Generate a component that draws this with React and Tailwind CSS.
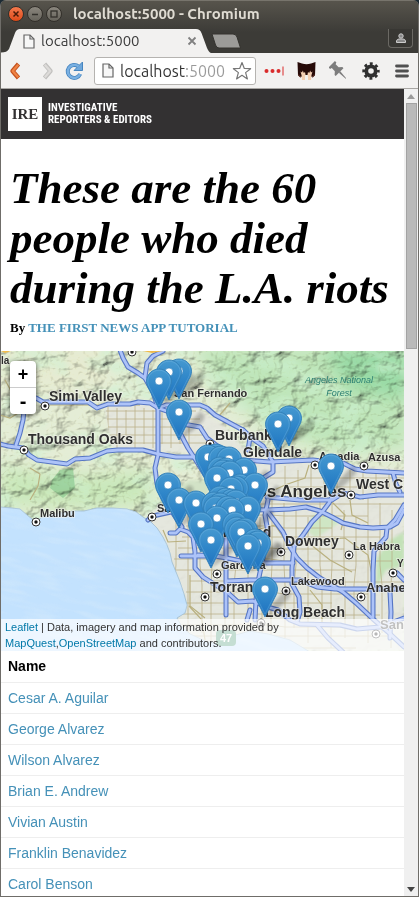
import React from "react";

const people = [
  "Cesar A. Aguilar",
  "George Alvarez",
  "Wilson Alvarez",
  "Brian E. Andrew",
  "Vivian Austin",
  "Franklin Benavidez",
  "Carol Benson",
];

const COAST =
  "M0 507L12 508L20 509L27 515L32 519L37 521L42 517L55 514L73 511L84 511L97 508L112 508L127 509L136 512L143 517L151 522L157 528L163 537L167 545L170 553L172 562L176 572L180 582L184 594L187 605L185 613L177 618L182 627L190 634L205 641L222 645L232 636L250 631L268 634L290 640L310 652L0 652Z";

const CITY =
  "M104 403L160 400L198 408L222 424L242 446L270 458L320 462L404 470L404 651L180 651L170 560L145 516L160 506L182 494L220 484L232 466L205 454L158 452L112 449Z";

const highways = [
  "M120 350L123 358L128 367L138 373L145 378L153 392L158 408L158 455L155 468L157 484L163 498L182 527",
  "M163 351L153 356L147 363L145 377",
  "M36 398L43 402L88 402L97 408L108 404L130 404L138 402L150 403L158 408L166 405L200 405L207 408L215 415L228 422L243 430L253 439L263 446L273 462",
  "M0 444L8 446L23 448L29 455L37 460L52 462L67 464L75 459L90 458L107 451L118 450L143 450L158 454L176 457L197 457L225 462L243 460L270 462L313 460L330 462L343 463L355 469L367 471L404 473",
  "M24 411L23 420L20 433L16 445",
  "M158 408L172 413L180 433L188 448L197 462L207 478L216 492",
  "M183 424L200 427L207 438L220 448L230 457",
  "M148 520L153 516L162 514L180 510L212 508L240 509L267 510L290 509L306 507L320 511L332 517L343 523L360 527L373 528L390 527L397 523L404 510",
  "M267 497L300 500L332 500L343 493L360 497L378 495L404 495",
  "M333 495L329 503L323 511L312 522L303 535L294 546L292 568L292 584L299 597L300 612L297 622",
  "M268 512L283 532L290 547L297 558L307 568L320 578L343 592L356 603L373 619L388 632L404 647",
  "M404 505L395 520L387 528L386 537L374 551L373 570L373 617",
  "M198 555L215 556L227 558L246 562L267 563L293 563",
  "M227 581L250 580L283 580L300 580L317 587L335 589L367 589L404 589",
  "M170 533L176 533L180 529L188 532L193 537L195 552L195 568L203 577L214 584L227 592L238 602L253 601L264 606L278 610L290 620L300 624L340 625L357 629L380 627L404 618",
  "M226 530L226 615",
  "M268 500L265 515L268 532L265 548L258 582L256 600L255 620",
  "M317 625L328 638L343 652",
  "M390 592L391 612L390 638",
  "M181 556L208 556",
  "M393 473L396 484L400 492",
  "M250 610L247 620",
  "M273 462L273 472L260 480L254 500",
  "M243 430L250 438L248 450",
  "M397 573L404 580",
];

const minorRoads = [
  "M30 468L40 474L38 486L30 500",
  "M0 415L10 418L20 412",
  "M43 405L140 405",
  "M5 380L15 398L30 402",
  "M270 492L285 485L305 478L309 465",
  "M256 530L275 525L285 540",
  "M320 540L345 538L368 555L372 575",
  "M330 500L345 515L341 530",
  "M350 500L352 515L368 523",
  "M305 540L330 560L352 572",
  "M205 640L202 620L189 606",
  "M163 530L168 542L186 541",
  "M230 403L219 416",
  "M256 473L245 462",
  "M310 590L322 605L322 625",
  "M190 575L190 606L205 618",
];

const towns = [
  [45, 406], [24, 450], [132, 352], [36, 522], [152, 517], [210, 444], [315, 465],
  [364, 466], [351, 495], [281, 552], [349, 555], [217, 574], [205, 597],
  [286, 591], [393, 573], [361, 597], [376, 634], [261, 623],
];

const labels = [
  ["Simi Valley", 49, 401, 14],
  ["Thousand Oaks", 28, 444, 14],
  ["la", 1, 364, 10],
  ["San Fernando", 174, 397, 11],
  ["Burbank", 215, 440, 14],
  ["Glendale", 243, 457, 14],
  ["Arcadia", 319, 460, 11],
  ["Azusa", 368, 461, 11],
  ["Los Angeles", 246, 497, 17],
  ["West C", 356, 489, 14],
  ["Malibu", 40, 517, 11],
  ["Santa", 157, 512, 11],
  ["Inglewood", 202, 537, 14],
  ["Downey", 285, 546, 14],
  ["La Habra", 353, 550, 11],
  ["Gardena", 221, 569, 11],
  ["Y", 397, 567, 10],
  ["Torrance", 210, 592, 14],
  ["Lakewood", 291, 585, 11],
  ["Anahe", 366, 592, 13],
  ["Long Beach", 265, 617, 14],
  ["San", 380, 629, 13],
];

const pins = [
  [179, 371], [169, 372], [159, 381], [179, 412], [289, 418], [278, 424],
  [216, 456], [208, 457], [221, 458], [229, 459], [331, 466], [220, 469],
  [244, 470], [226, 470], [223, 472], [230, 473], [217, 478], [168, 485],
  [240, 486], [255, 485], [236, 488], [231, 489], [220, 498], [179, 500],
  [226, 500], [232, 501], [236, 502], [196, 503], [214, 504], [220, 505],
  [248, 508], [216, 508], [228, 508], [232, 510], [217, 518], [235, 524],
  [201, 524], [237, 529], [245, 530], [241, 532], [211, 540], [255, 541],
  [258, 543], [248, 546], [265, 589],
];

const PIN =
  "M12.5 .5C5.8 .5 0 5.9 0 12.7C0 15.7 1.2 18.4 2.8 21.2L12.5 40.5L22.2 21.2C23.8 18.4 25 15.7 25 12.7C25 5.9 19.2 .5 12.5 .5Z";

function streetGrid() {
  const lines = [];
  for (let i = 0; i < 10; i++) {
    const x = 108 + i * 9;
    lines.push(`M${x} ${406 + (i % 3) * 2}V${444 + (i % 2) * 4}`);
  }
  for (let i = 0; i < 5; i++) {
    const y = 411 + i * 8;
    lines.push(`M${106 - (i % 2) * 10} ${y}H${196 + i * 4}`);
  }
  for (let i = 0; i < 19; i++) {
    const x = 176 + i * 12;
    const bend = ((i * 7) % 5) - 2;
    lines.push(`M${x} ${496 + ((i * 5) % 4) * 7}V565L${x + bend} 585V${628 + ((i * 3) % 5) * 5}`);
  }
  for (let i = 0; i < 14; i++) {
    const y = 504 + i * 11;
    const start = 170 + ((i * 11) % 6) * 4;
    const end = 404 - ((i * 17) % 7) * 12;
    lines.push(`M${start} ${y}H270L285 ${y + (i % 3)}H${end}`);
  }
  for (let i = 0; i < 9; i++) {
    lines.push(`M${285 + i * 13} ${466 + (i % 2) * 4}V${500 - (i % 3) * 5}`);
  }
  lines.push("M270 478H404", "M285 487H390");
  return lines.join("");
}

function Pin({ x, y }) {
  return (
    <g transform={`translate(${x - 12.5} ${y - 12.5})`}>
      <path d={PIN} fill="url(#pinFill)" stroke="#3380b8" strokeWidth=".9" />
      <path
        d="M12.5 1.7C6.5 1.7 1.3 6.6 1.3 12.7C1.3 15.4 2.4 18 3.9 20.6L12.5 37.6L21.1 20.6C22.6 18 23.7 15.4 23.7 12.7C23.7 6.6 18.5 1.7 12.5 1.7Z"
        fill="none"
        stroke="#8cc6ee"
        strokeOpacity=".28"
      />
      <circle cx="12.5" cy="12.5" r="4" fill="#fff" stroke="#2f7fbc" strokeWidth=".6" />
    </g>
  );
}

function MapArt() {
  return (
    <svg
      className="block h-[300px] w-full"
      viewBox="1 351 403 300"
      preserveAspectRatio="xMidYMid slice"
      role="img"
      aria-label="Map of Los Angeles"
    >
      <defs>
        <linearGradient id="pinFill" x1="0" y1="0" x2="0" y2="1">
          <stop offset="0" stopColor="#4699d0" />
          <stop offset=".5" stopColor="#2f86c9" />
          <stop offset="1" stopColor="#1d71bf" />
        </linearGradient>
        <filter id="soft" x="-30%" y="-30%" width="160%" height="160%">
          <feGaussianBlur stdDeviation="1.8" />
        </filter>
        <filter id="wash" x="-30%" y="-30%" width="160%" height="160%">
          <feGaussianBlur stdDeviation="9" />
        </filter>
        <filter id="relief" x="0" y="0" width="100%" height="100%">
          <feTurbulence type="fractalNoise" baseFrequency="0.05 0.065" numOctaves="4" seed="8" />
          <feColorMatrix values="0 0 0 0 0  0 0 0 0 0  0 0 0 0 0  1 0 0 0 0" />
          <feDiffuseLighting surfaceScale="10" diffuseConstant="1.25" lightingColor="#fffdf4">
            <feDistantLight azimuth="225" elevation="60" />
          </feDiffuseLighting>
        </filter>
        <filter id="patches" x="0" y="0" width="100%" height="100%">
          <feTurbulence type="fractalNoise" baseFrequency="0.022 0.035" numOctaves="3" seed="21" />
          <feColorMatrix values="0 0 0 0 .62  0 0 0 0 .88  0 0 0 0 .65  5 0 0 0 -2.35" />
        </filter>
        <filter id="waves" x="0" y="0" width="100%" height="100%">
          <feTurbulence type="fractalNoise" baseFrequency="0.03 0.16" numOctaves="2" seed="4" />
          <feColorMatrix values="0 0 0 0 .69  0 0 0 0 .84  0 0 0 0 .97  3 0 0 0 -1.3" />
        </filter>
        <clipPath id="sea"><path d={COAST} /></clipPath>
        <clipPath id="town"><path d={CITY} /></clipPath>
      </defs>

      <rect x="1" y="351" width="403" height="300" fill="#e4edd6" />
      <g filter="url(#wash)">
        <path d="M190 345H410V450L330 452L270 430L215 385Z" fill="#bfe6bb" />
        <path d="M0 465L60 475L150 470V505L90 510L0 505Z" fill="#c9e8bb" />
        <path d="M320 345H410V400L350 390Z" fill="#98daa6" />
        <path d="M0 345H120L100 385L0 390Z" fill="#e6ebd2" />
      </g>
      <rect x="1" y="351" width="403" height="300" filter="url(#patches)" opacity=".5" />
      <path d="M52 480L60 470L73 468L75 488L63 498L50 488Z" fill="#8fcb93" opacity=".75" />
      <rect x="1" y="351" width="403" height="300" filter="url(#relief)" className="mix-blend-multiply" opacity=".55" />
      <path d={CITY} fill="#e6e7df" opacity=".93" filter="url(#soft)" />
      <path d="M312 515L326 514L342 521L328 530L316 538L308 532Z" fill="#cfe6c4" filter="url(#soft)" />
      <path d="M377 558L390 540L404 532V566L386 570L376 588Z" fill="#c3e2b8" filter="url(#soft)" />
      <path d="M165 496L190 480L215 482L205 498L180 504Z" fill="#d2e2c6" filter="url(#soft)" />

      <g clipPath="url(#town)">
        <path d={streetGrid()} fill="none" stroke="#b8ae86" strokeWidth="1" opacity=".75" />
      </g>
      {minorRoads.map((d) => (
        <path key={d} d={d} fill="none" stroke="#b9b07f" strokeWidth="1.2" />
      ))}

      <path d={COAST} fill="#c3e2fe" stroke="#a9c4d6" strokeWidth="1" />
      <g clipPath="url(#sea)">
        <g transform="rotate(12 150 580)">
          <rect x="-30" y="460" width="400" height="240" filter="url(#waves)" opacity=".4" />
        </g>
      </g>

      <g fill="none" strokeLinejoin="round" strokeLinecap="round">
        {highways.map((d) => (
          <path key={d} d={d} stroke="#5676c4" strokeWidth="5" />
        ))}
        {highways.map((d) => (
          <path key={d} d={d} stroke="#adc3f8" strokeWidth="2.8" />
        ))}
      </g>

      <path d="M1 351H11L5 353ZM143 351H163L152 353Z" fill="#f0bb4b" />

      {towns.map(([x, y]) => (
        <g key={`${x}-${y}`}>
          <circle cx={x} cy={y} r="4" fill="#fff" stroke="#333" strokeWidth="1" />
          <circle cx={x} cy={y} r="1.7" fill="#111" />
        </g>
      ))}

      <g
        className="font-['Liberation_Sans',Arial,sans-serif] font-bold"
        fill="#2f2f2f"
        stroke="#f4f4ee"
        strokeWidth="1.6"
        strokeOpacity=".7"
        paintOrder="stroke"
      >
        {labels.map(([name, x, y, size]) => (
          <text key={name} x={x} y={y} fontSize={size}>
            {name}
          </text>
        ))}
      </g>
      <g
        className="font-['Liberation_Sans',Arial,sans-serif] italic"
        fill="#2a7f72"
        fontSize="9"
        textAnchor="middle"
      >
        <text x="339" y="383">Angeles National</text>
        <text x="339" y="396">Forest</text>
      </g>
      <rect x="216" y="630" width="20" height="16" rx="4" fill="#3f8f6b" />
      <text x="226" y="642" fontSize="11" textAnchor="middle" fill="#fff" className="font-['Liberation_Sans',Arial,sans-serif] font-bold">
        47
      </text>

      {pins.map(([x, y]) => (
        <path
          key={`${x}-${y}`}
          transform={`translate(${x - 12.5} ${y - 12.5})`}
          d="M13 40L20 27L33 13Q40 13 37 21L27 31Z"
          fill="#111"
          opacity=".22"
          filter="url(#soft)"
        />
      ))}
      {pins.map(([x, y]) => (
        <Pin key={`${x}-${y}`} x={x} y={y} />
      ))}
    </svg>
  );
}

function PageIcon() {
  return (
    <svg width="12" height="15" viewBox="0 0 12 15" className="shrink-0">
      <path d="M1 1H7L11 5V14H1Z" fill="#f7f7f7" stroke="#666" strokeWidth="1.2" />
      <path d="M7 1V5H11" fill="none" stroke="#666" strokeWidth="1.2" />
    </svg>
  );
}

function TitleBar() {
  return (
    <div className="flex h-7 items-center gap-[3px] pl-[7px]">
      <button aria-label="Close" className="h-4 w-4 rounded-full border border-[#33302b] bg-linear-to-b from-[#f4794c] to-[#df4a16]">
        <svg viewBox="0 0 14 14" className="block">
          <path d="M4.5 4.5L9.5 9.5M9.5 4.5L4.5 9.5" stroke="#4a1b08" strokeWidth="1.5" />
        </svg>
      </button>
      <button aria-label="Minimize" className="h-4 w-4 rounded-full border border-[#33302b] bg-linear-to-b from-[#8b877e] to-[#66635b]">
        <svg viewBox="0 0 14 14" className="block">
          <path d="M4 7.5H10" stroke="#33312c" strokeWidth="1.3" />
        </svg>
      </button>
      <button aria-label="Maximize" className="h-4 w-4 rounded-full border border-[#33302b] bg-linear-to-b from-[#8b877e] to-[#66635b]">
        <svg viewBox="0 0 14 14" className="block">
          <rect x="4" y="4" width="6" height="6" fill="none" stroke="#33312c" strokeWidth="1.3" />
        </svg>
      </button>
      <span className="ml-2 whitespace-nowrap text-[15px] font-bold leading-7 text-[#dfdbd2]">
        localhost:5000 - Chromium
      </span>
    </div>
  );
}

function TabStrip() {
  return (
    <div className="flex h-[25px] items-start">
      <div className="relative flex h-full w-[210px] items-center pl-[22px] pr-3 pt-px">
        <svg className="absolute inset-0 h-full w-full" viewBox="0 0 210 25" preserveAspectRatio="none" aria-hidden="true">
          <path d="M0 25V24.500Q6 24.500 8 21L14 5Q15.500 1 19 1H195Q199 1 200.500 5L206 20Q208 24.500 210 25Z" fill="#f2f1f0" />
        </svg>
        <div className="relative flex flex-1 items-center gap-1.5">
          <PageIcon />
          <span className="flex-1 text-[15px] leading-5 text-[#3c3c3c]">localhost:5000</span>
          <button aria-label="Close tab" className="mr-[1px] h-3 w-3">
            <svg viewBox="0 0 12 12">
              <path d="M2.500 2.500L9.500 9.500M9.500 2.500L2.500 9.500" stroke="#808080" strokeWidth="1.8" />
            </svg>
          </button>
        </div>
      </div>
      <button aria-label="New tab" className="mt-[5px]">
        <svg width="31" height="16" viewBox="0 0 31 16" className="block">
          <path d="M1 1H22Q25 1 26 4L29.500 15H8Q5.500 15 4.500 12Z" fill="#9c9b98" stroke="#34332f" />
        </svg>
      </button>
      <button aria-label="Profile" className="ml-auto mr-[5px] mt-px flex h-[19px] w-[25px] items-center justify-center rounded-b-[4px] border border-t-0 border-[#6b6964] bg-[#383733]">
        <svg width="12" height="12" viewBox="0 0 12 12">
          <circle cx="6" cy="4" r="2.200" fill="#888" stroke="#ccc" />
          <path d="M1.500 10.500V9Q2 7 4 7H8Q10 7 10.500 9V10.500Z" fill="#888" stroke="#ccc" />
        </svg>
      </button>
    </div>
  );
}

function Toolbar() {
  return (
    <div className="flex h-[36px] items-center border-b border-[#a8a6a3] bg-[#f2f1f0]">
      <button aria-label="Back" className="ml-[7px] shrink-0">
        <svg width="15" height="20" viewBox="0 0 15 20" className="block">
          <path d="M10.500 3L4.500 10L10.500 17" fill="none" stroke="#c4521f" strokeWidth="4.400" strokeLinejoin="round" strokeLinecap="butt" />
          <path d="M10.200 3.700L4.700 10L10.200 16.300" fill="none" stroke="#f08344" strokeWidth="2.300" strokeLinejoin="round" strokeLinecap="butt" />
        </svg>
      </button>
      <button aria-label="Forward" className="ml-[17px] shrink-0">
        <svg width="15" height="20" viewBox="0 0 15 20" className="block">
          <path d="M4.500 3L10.500 10L4.500 17" fill="none" stroke="#c2c1bf" strokeWidth="4.400" strokeLinejoin="round" strokeLinecap="butt" />
          <path d="M4.800 3.700L10.300 10L4.800 16.300" fill="none" stroke="#dddbd9" strokeWidth="2.300" strokeLinejoin="round" strokeLinecap="butt" />
        </svg>
      </button>
      <button aria-label="Reload" className="ml-[9px] shrink-0">
        <svg width="20" height="20" viewBox="0 0 20 20" className="block">
          <path d="M14.500 5.500A6.500 6.500 0 1 0 16.200 13" fill="none" stroke="#4785bf" strokeWidth="4" />
          <path d="M18.500 1V9.500H10Z" fill="#6fa8dc" stroke="#4785bf" strokeLinejoin="round" />
          <path d="M14.500 5.500A6.500 6.500 0 1 0 16.200 13" fill="none" stroke="#79b0e2" strokeWidth="2.400" />
        </svg>
      </button>
      <div className="ml-2.5 flex h-7 min-w-0 flex-1 items-center rounded-[3px] border border-[#b5b3b0] bg-white pl-[7px] pr-[3px]">
        <PageIcon />
        <input
          aria-label="Address"
          defaultValue="localhost:5000"
          className="ml-1.5 min-w-0 flex-1 bg-[linear-gradient(to_right,#333_66px,#999_66px)] bg-clip-text text-[16px] leading-6 text-transparent outline-none"
        />
        <button aria-label="Bookmark" className="shrink-0">
          <svg width="20" height="20" viewBox="0 0 20 20" className="block">
            <path d="M10 1.500L12.300 7.500L18.600 7.700L13.600 11.600L15.400 17.900L10 14.300L4.600 17.900L6.400 11.600L1.400 7.700L7.700 7.500Z" fill="#fff" stroke="#777" strokeWidth="1.200" strokeLinejoin="round" />
          </svg>
        </button>
      </div>
      <button aria-label="Passwords" className="ml-2 shrink-0">
        <svg width="20" height="12" viewBox="0 0 20 12" className="block">
          <g fill="#d92b2b">
            <circle cx="2.500" cy="6" r="2" />
            <circle cx="8.500" cy="6" r="2" />
            <circle cx="14.500" cy="6" r="2" />
            <rect x="18.500" y="1.500" width="1" height="9" />
          </g>
        </svg>
      </button>
      <button aria-label="Extension" className="ml-[13px] shrink-0">
        <svg width="19" height="20" viewBox="0 0 19 20" className="block">
          <path d="M.5 1L5 2.500Q9.500 4 14 2.500L18.500 1L18 14.500L15 16L12 14H7L4 16L1 14.500Z" fill="#260a08" />
          <path d="M1 12.500L3 14.500L4 17L2 15.500ZM18 12.500L16 14.500L15 17L17 15.500Z" fill="#5a2a20" />
          <path d="M5 19L4.500 14L3.500 10.500L5 11.500L5.800 9.500L6.800 12L8 11L8.500 13.500L8 16V19Z" fill="#f3cfb2" />
          <path d="M14 19L14.500 14L15.500 10.500L14 11.500L13.200 9.500L12.200 12L11 11L10.500 13.500L11 16V19Z" fill="#f3cfb2" />
        </svg>
      </button>
      <button aria-label="Pin" className="ml-[13px] shrink-0">
        <svg width="20" height="20" viewBox="0 0 20 20" className="block">
          <g transform="translate(9.500 10) rotate(-45)" fill="#7d7d7d">
            <path d="M-4.500 -9.500H4.500V-7.500L2.700 -6.800V-2.500L5.500 0V1.500H-5.500V0L-2.700 -2.500V-6.800L-4.500 -7.500Z" />
            <path d="M-1 1.500H1L.3 10.500H-.3Z" />
          </g>
        </svg>
      </button>
      <button aria-label="Settings" className="ml-3 shrink-0">
        <svg width="20" height="20" viewBox="0 0 20 20" className="block">
          <circle cx="10" cy="10" r="4.700" fill="none" stroke="#303030" strokeWidth="3.800" />
          <circle cx="10" cy="10" r="7.200" fill="none" stroke="#303030" strokeWidth="3" strokeDasharray="2.830 2.825" strokeDashoffset="1.400" />
        </svg>
      </button>
      <button aria-label="Menu" className="ml-3.5 mr-[9px] shrink-0">
        <svg width="14" height="14" viewBox="0 0 14 14" className="block">
          <path d="M1.500 2H12.500M1.500 7H12.500M1.500 12H12.500" stroke="#505050" strokeWidth="2.800" strokeLinecap="round" />
        </svg>
      </button>
    </div>
  );
}

function Scrollbar() {
  return (
    <div className="flex w-[14px] shrink-0 flex-col items-center bg-[#f0f0f0]" aria-hidden="true">
      <div className="flex h-[14px] shrink-0 items-center">
        <svg width="8" height="5" viewBox="0 0 8 5"><path d="M4 0L8 5H0Z" fill="#9a9a9a" /></svg>
      </div>
      <div className="flex w-full flex-1 justify-center">
        <div className="h-[246px] w-[11px] border border-[#a3a3a3] bg-[#bababa]" />
      </div>
      <div className="flex h-[14px] shrink-0 items-center">
        <svg width="8" height="5" viewBox="0 0 8 5"><path d="M0 0H8L4 5Z" fill="#444" /></svg>
      </div>
    </div>
  );
}

function Page() {
  return (
    <main className="min-w-0 flex-1 overflow-hidden bg-white">
      <header className="flex h-[50px] items-center gap-1.5 bg-[#333132] pl-[7px]">
        <span className="flex h-[34px] w-[34px] items-center justify-center bg-white font-['Liberation_Serif',serif] text-[15px] font-bold text-[#333132]">
          IRE
        </span>
        <span className="font-['Liberation_Sans_Narrow','Roboto_Condensed',Roboto,sans-serif] text-[11px] font-bold leading-[12px] text-white">
          INVESTIGATIVE
          <br />
          REPORTERS &amp; EDITORS
        </span>
      </header>
      <section className="px-[9px] pb-3.5 pt-6 font-['Liberation_Serif','Times_New_Roman',serif] font-bold">
        <h1 className="text-[45px] italic leading-[50px] text-black">
          These are the 60 people who died during the L.A. riots
        </h1>
        <p className="mt-1.5 text-[13px] leading-[18px]">
          By <a href="#tutorial" className="text-[#4591b8]">THE FIRST NEWS APP TUTORIAL</a>
        </p>
      </section>
      <section className="relative font-['Liberation_Sans',Arial,sans-serif]">
        <MapArt />
        <div className="absolute left-[9px] top-2.5 w-[26px] overflow-hidden rounded-[4px] bg-white shadow-[0_1px_5px_rgba(0,0,0,0.65)]">
          <button aria-label="Zoom in" className="block h-[27px] w-full border-b border-[#ccc] text-center text-[18px] font-bold leading-[26px] text-black">+</button>
          <button aria-label="Zoom out" className="block h-[26px] w-full text-center text-[20px] font-bold leading-[26px] text-black">-</button>
        </div>
        <div className="absolute inset-x-0 bottom-0 bg-white/70 px-1 text-[11px] leading-4 text-[#333]">
          <a href="#leaflet" className="text-[#0078a8]">Leaflet</a> | Data, imagery and map information provided by
          <br />
          <a href="#mapquest" className="text-[#0078a8]">MapQuest</a>,<a href="#osm" className="text-[#0078a8]">OpenStreetMap</a> and contributors.
        </div>
      </section>
      <table className="w-full border-collapse text-left font-['Liberation_Sans',Arial,sans-serif] text-[14px] leading-5">
        <thead>
          <tr className="h-[31px] border-b border-[#eee]">
            <th className="px-[7px] font-bold text-black">Name</th>
          </tr>
        </thead>
        <tbody>
          {people.map((name) => (
            <tr key={name} className="h-[31px] border-b border-[#eee]">
              <td className="px-[7px]">
                <a href="#person" className="text-[#4591b8]">{name}</a>
              </td>
            </tr>
          ))}
        </tbody>
      </table>
    </main>
  );
}

export default function App() {
  return (
    <div className="h-screen bg-[#1c2a33] font-['Ubuntu','Noto_Sans',sans-serif]">
      <div className="flex h-full flex-col overflow-hidden rounded-t-[6px] border-x border-b border-[#6f6d69] bg-[#3c3b37]">
        <div className="border-t border-[#77746c] bg-linear-to-b from-[#57544c] to-[#3c3b37] to-60%">
          <div className="-mt-px">
            <TitleBar />
            <TabStrip />
          </div>
        </div>
        <Toolbar />
        <div className="flex min-h-0 flex-1">
          <Page />
          <Scrollbar />
        </div>
      </div>
    </div>
  );
}
